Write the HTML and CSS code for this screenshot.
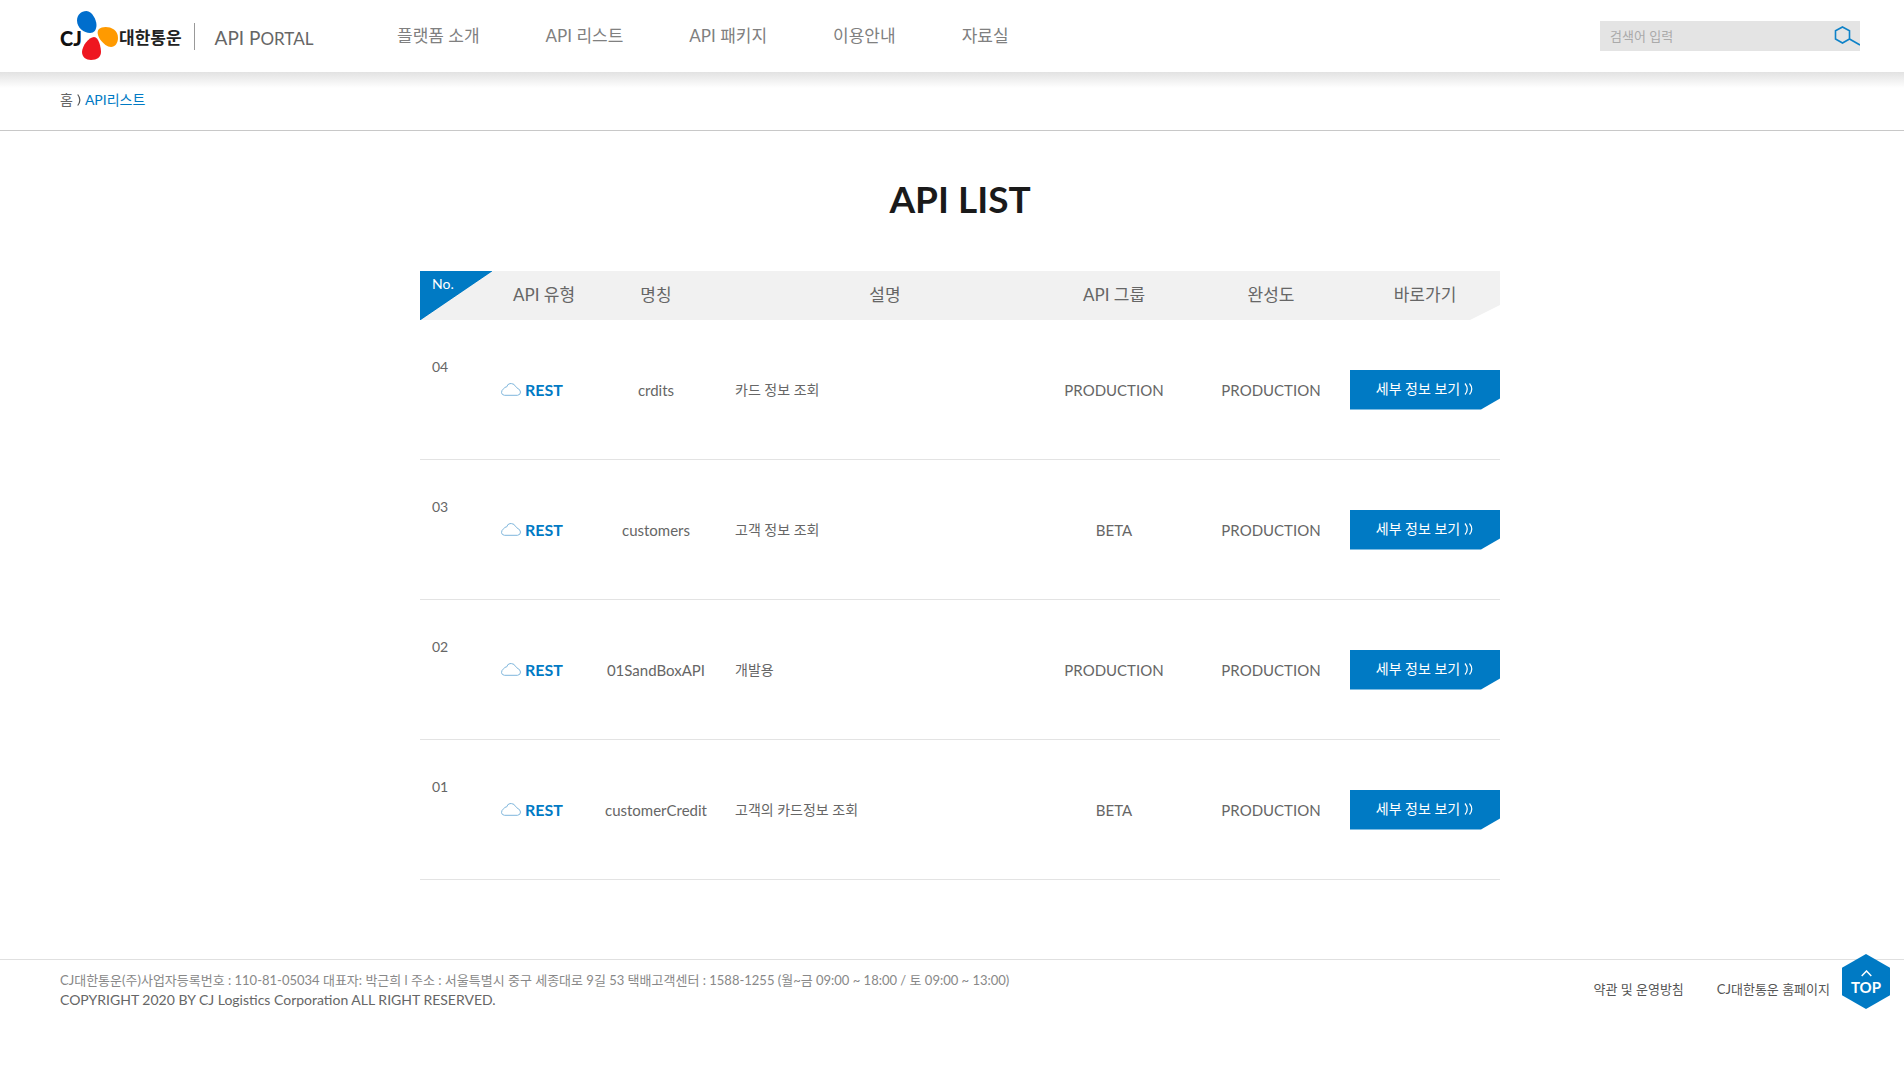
FILE: index.html
```html
<!DOCTYPE html>
<html lang="ko">
<head>
<meta charset="utf-8">
<meta name="viewport" content="width=device-width, initial-scale=1">
<title>API LIST</title>
<link rel="stylesheet" href="styles.css">
</head>
<body>
<svg class="sprite" aria-hidden="true">
  <symbol id="cloud" viewBox="0 0 20 13"><path d="M3.5 12.3H16.5Q19.5 12 19.5 9Q19 6 16.2 5.2Q15.8 4 14.5 3.5Q13.5 .7 10.5 .6H9Q6.3 1 5.8 3.8Q3.5 3.9 2.6 5.8Q.6 7 .5 9.7Q.8 12 3.5 12.3Z" fill="none" stroke="#7fb6dc" stroke-width="1"/></symbol>
  <symbol id="chevrons" viewBox="0 0 10 12"><path d="M1 .5Q5.500 6 1 11.500M5.500 .5Q10 6 5.500 11.500" fill="none" stroke="#fff" stroke-width="1.200"/></symbol>
</svg>
<header class="header">
  <a class="brand" href="#">
    <span class="logo">
      <span class="logo-cj">CJ</span>
      <svg class="petals" viewBox="0 0 42 50" aria-hidden="true">
        <path d="M9.500 0C15 0 19.500 9 19.500 14C19.500 19 17 22 13 22C7 22 0 17 0 9.500C0 4 4 0 9.500 0Z" fill="#006ecd"/>
        <path d="M22 18C26 14 41 15 41 27C41 32 38 36 34 36C27 36 17 23 22 18Z" fill="#ff9a00"/>
        <path d="M17 26C22 26 24 37 24 41C24 46 20 49 14 49C9 49 5 46 5 41C5 35 12 26 17 26Z" fill="#ee1620"/>
      </svg>
      <span class="logo-name">대한통운</span>
    </span>
    <span class="portal">API P<small>ORTAL</small></span>
  </a>
  <nav class="nav">
    <a href="#">플랫폼 소개</a>
    <a href="#">API 리스트</a>
    <a href="#">API 패키지</a>
    <a href="#">이용안내</a>
    <a href="#">자료실</a>
  </nav>
  <form class="search">
    <input class="search-input" type="text" placeholder="검색어 입력" aria-label="검색어 입력">
    <button class="search-button" type="button" aria-label="검색">
      <svg width="26" height="20" viewBox="0 0 26 20" aria-hidden="true"><path d="M8.500 1L15.500 4.800V13L8.500 17L1.500 13V4.800ZM15.500 13L26 19" fill="none" stroke="#0e82c8" stroke-width="1.600"/></svg>
    </button>
  </form>
</header>
<nav class="breadcrumb" aria-label="현재 위치">
  <a href="#">홈</a>
  <svg width="4" height="12" viewBox="0 0 4 12" aria-hidden="true"><path d="M.7 .5Q5 6 .7 11.500" fill="none" stroke="#555" stroke-width="1.200"/></svg>
  <a class="current" href="#">API리스트</a>
</nav>
<main class="main">
  <div class="content">
    <h1 class="title">API LIST</h1>
    <table class="list">
      <colgroup><col class="c-no"><col class="c-type"><col class="c-name"><col class="c-desc"><col class="c-group"><col class="c-status"><col class="c-link"></colgroup>
      <thead>
        <tr><th class="no">No.</th><th class="type">API 유형</th><th>명칭</th><th>설명</th><th>API 그룹</th><th>완성도</th><th>바로가기</th></tr>
      </thead>
      <tbody>
        <tr><td class="no">04</td><td><span class="rest"><svg width="20" height="13"><use href="#cloud"/></svg>REST</span></td><td>crdits</td><td class="desc">카드 정보 조회</td><td>PRODUCTION</td><td>PRODUCTION</td><td><a class="more" href="#">세부 정보 보기 <svg width="10" height="12"><use href="#chevrons"/></svg></a></td></tr>
        <tr><td class="no">03</td><td><span class="rest"><svg width="20" height="13"><use href="#cloud"/></svg>REST</span></td><td>customers</td><td class="desc">고객 정보 조회</td><td>BETA</td><td>PRODUCTION</td><td><a class="more" href="#">세부 정보 보기 <svg width="10" height="12"><use href="#chevrons"/></svg></a></td></tr>
        <tr><td class="no">02</td><td><span class="rest"><svg width="20" height="13"><use href="#cloud"/></svg>REST</span></td><td>01SandBoxAPI</td><td class="desc">개발용</td><td>PRODUCTION</td><td>PRODUCTION</td><td><a class="more" href="#">세부 정보 보기 <svg width="10" height="12"><use href="#chevrons"/></svg></a></td></tr>
        <tr><td class="no">01</td><td><span class="rest"><svg width="20" height="13"><use href="#cloud"/></svg>REST</span></td><td>customerCredit</td><td class="desc">고객의 카드정보 조회</td><td>BETA</td><td>PRODUCTION</td><td><a class="more" href="#">세부 정보 보기 <svg width="10" height="12"><use href="#chevrons"/></svg></a></td></tr>
      </tbody>
    </table>
  </div>
</main>
<footer class="footer">
  <div class="company">
    <p>CJ대한통운(주)사업자등록번호 : 110-81-05034 대표자: 박근희 l 주소 : 서울특별시 중구 세종대로 9길 53 택배고객센터 : 1588-1255 (월~금 09:00 ~ 18:00 / 토 09:00 ~ 13:00)</p>
    <p class="copyright">COPYRIGHT 2020 BY CJ Logistics Corporation ALL RIGHT RESERVED.</p>
  </div>
  <div class="links">
    <a href="#">약관 및 운영방침</a>
    <a href="#">CJ대한통운 홈페이지</a>
  </div>
</footer>
<a class="top" href="#">
  <svg width="11" height="7" viewBox="0 0 11 7" aria-hidden="true"><path d="M.7 6L5.500 1L10.300 6" fill="none" stroke="#fff" stroke-width="1.500"/></svg>
  TOP
</a>
</body>
</html>
```
FILE: styles.css
```css
* { box-sizing: border-box; }
body {
  margin: 0;
  background: #fff;
  color: #666;
  font: 14px/20px Lato, "Noto Sans CJK KR", sans-serif;
}
a { color: inherit; text-decoration: none; }
p, h1 { margin: 0; }
.sprite { display: none; }

.header {
  display: flex;
  align-items: center;
  height: 72px;
  padding: 0 44px 0 60px;
  background: #fff;
}
.brand { display: flex; align-items: center; width: 337px; }
.logo { display: flex; align-items: center; padding-right: 12px; }
.logo-cj {
  width: 17px;
  padding-top: 4px;
  color: #111;
  font-size: 20px;
  font-weight: 900;
}
.petals { width: 42px; height: 50px; }
.logo-name {
  padding-top: 4px;
  color: #222;
  font-size: 17px;
  font-weight: 700;
}
.portal {
  padding: 4px 0 0 20px;
  border-left: 1px solid #999;
  font-size: 19px;
  line-height: 22px;
}
.portal small { font-size: 17px; }
.nav {
  display: flex;
  gap: 66px;
  color: #808080;
  font-size: 17px;
}
.search {
  display: flex;
  width: 260px;
  height: 30px;
  margin-left: auto;
  background: #e4e4e4;
}
.search-input {
  flex: 1;
  min-width: 0;
  padding: 0 10px;
  border: 0;
  background: none;
  color: #666;
  font: inherit;
  font-size: 13px;
}
.search-input::placeholder { color: #aaa; }
.search-button {
  display: flex;
  align-items: center;
  padding: 0;
  border: 0;
  background: none;
}

.breadcrumb {
  display: flex;
  align-items: center;
  gap: 4px;
  height: 59px;
  padding: 0 0 2px 60px;
  border-bottom: 1px solid #c8c8c8;
  background: linear-gradient(#e2e2e2, #fff 16px);
}
.current { color: #007ac4; }

.main { padding: 48px 0 79px 16px; }
.content { max-width: 1080px; margin: 0 auto; }
.title {
  margin-bottom: 52px;
  color: #1a1a1a;
  font-size: 37px;
  font-weight: 700;
  line-height: 40px;
  text-align: center;
}
.list {
  width: 100%;
  table-layout: fixed;
  border-collapse: separate;
  border-spacing: 0;
  text-align: center;
}
.c-no { width: 66px; }
.c-type { width: 92px; }
.c-name, .c-group { width: 156px; }
.c-status { width: 158px; }
.c-link { width: 150px; }
.list thead {
  background: linear-gradient(to bottom right, #007ac4 50%, transparent 51%) 0 0 / 72px 49px no-repeat, #f1f1f1;
  clip-path: polygon(0 0, 100% 0, 100% 34px, calc(100% - 30px) 100%, 0 100%);
}
.list th {
  height: 49px;
  padding: 0 0 2px;
  font-size: 17px;
  font-weight: 400;
}
.list th.no {
  padding: 3px 0 0 12px;
  color: #fff;
  font-size: 14px;
  text-align: left;
  vertical-align: top;
}
.list th.type { padding-left: 24px; }
.list td {
  height: 140px;
  padding: 0;
  border-bottom: 1px solid #e3e3e3;
  font-size: 15px;
}
.list td.no {
  padding: 37px 0 0 12px;
  font-size: 14px;
  text-align: left;
  vertical-align: top;
}
.list td.desc { padding-left: 1px; font-size: 14px; text-align: left; }
.rest {
  display: flex;
  align-items: center;
  justify-content: center;
  gap: 4px;
  color: #007ac4;
  font-size: 16px;
  font-weight: 700;
}
.more {
  display: flex;
  align-items: center;
  justify-content: center;
  gap: 4px;
  height: 40px;
  padding-bottom: 2px;
  background: #007ac4;
  clip-path: polygon(0 0, 100% 0, 100% 29px, calc(100% - 19px) 100%, 0 100%);
  color: #fff;
  font-size: 14px;
}

.footer {
  display: flex;
  justify-content: space-between;
  padding: 10px 74px 16px 60px;
  border-top: 1px solid #e0e0e0;
  font-size: 13px;
}
.company { color: #888; }
.copyright { color: #666; font-size: 14px; }
.links { display: flex; gap: 33px; padding-top: 9px; color: #555; }
.top {
  position: fixed;
  right: 14px;
  bottom: 71px;
  display: flex;
  flex-direction: column;
  align-items: center;
  width: 48px;
  height: 55px;
  padding-top: 16px;
  background: #007ac4;
  clip-path: polygon(50% 0, 100% 25%, 100% 75%, 50% 100%, 0 75%, 0 25%);
  color: #fff;
  font-size: 15px;
  font-weight: 700;
}
```
